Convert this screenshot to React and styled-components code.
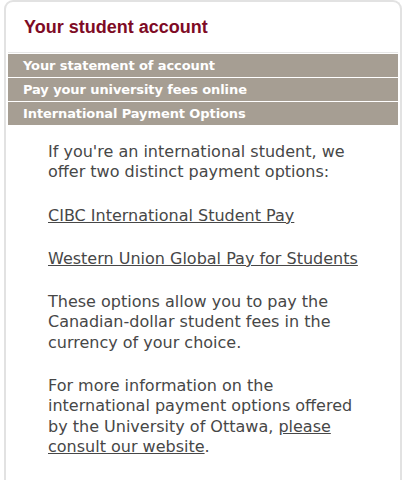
import React from "react";
import styled, { createGlobalStyle } from "styled-components";

const GlobalStyle = createGlobalStyle`
  html, body {
    margin: 0;
    padding: 0;
    background: #ffffff;
  }
`;

const Box = styled.div`
  margin-left: 4px;
  width: 398px;
  box-sizing: border-box;
  min-height: 480px;
  border: 2px solid #e2e2e2;
  border-bottom: none;
  border-radius: 9px 9px 0 0;
  padding: 0 2px;
  background: #fff;
`;

const Title = styled.h2`
  margin: 0;
  height: 51px;
  box-sizing: border-box;
  padding: 15px 0 0 16px;
  font-family: "Liberation Sans", Arial, sans-serif;
  font-size: 18px;
  font-weight: bold;
  color: #7e0b25;
  border-bottom: 1px solid #e6e6e6;
`;

const Menu = styled.ul`
  list-style: none;
  margin: 0;
  padding: 0;
`;

const MenuItem = styled.li`
  height: 23px;
  line-height: 23px;
  margin-top: 1px;
  padding-left: 15px;
  background: #a69e93;
  color: #ffffff;
  font-family: Verdana, "DejaVu Sans", sans-serif;
  font-size: 13px;
  font-weight: bold;
  letter-spacing: -0.1px;
  white-space: nowrap;
  overflow: hidden;
`;

const Content = styled.div`
  padding: 17px 30px 20px 40px;
  font-family: Verdana, "DejaVu Sans", sans-serif;
  font-size: 16px;
  line-height: 20.4px;
  color: #474747;
`;

const Para = styled.p`
  margin: 0 0 22.8px 0;
`;

const Link = styled.a`
  color: #474747;
  text-decoration: underline;
`;

export default function App() {
  return (
    <>
      <GlobalStyle />
      <Box>
        <Title>Your student account</Title>
        <Menu>
          <MenuItem>Your statement of account</MenuItem>
          <MenuItem>Pay your university fees online</MenuItem>
          <MenuItem>International Payment Options</MenuItem>
        </Menu>
        <Content>
          <Para>
            If you're an international student, we offer two distinct payment
            options:
          </Para>
          <Para>
            <Link href="#">CIBC International Student Pay</Link>
          </Para>
          <Para>
            <Link href="#">Western Union Global Pay for Students</Link>
          </Para>
          <Para>
            These options allow you to pay the Canadian-dollar student fees in
            the currency of your choice.
          </Para>
          <Para>
            For more information on the international payment options offered
            by the University of Ottawa,{" "}
            <Link href="#">please consult our website</Link>.
          </Para>
        </Content>
      </Box>
    </>
  );
}
